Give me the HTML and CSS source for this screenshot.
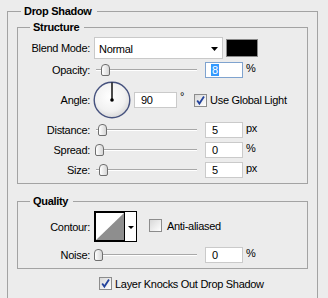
FILE: index.html
```html
<!DOCTYPE html>
<html>
<head>
<meta charset="utf-8">
<link rel="stylesheet" href="styles.css">
</head>
<body>
<fieldset class="group outer">
  <legend class="legend outer-legend">Drop Shadow</legend>

  <fieldset class="group inner structure">
    <legend class="legend inner-legend">Structure</legend>

    <div class="row row-blend">
      <span class="lbl">Blend Mode:</span>
      <div class="ctl">
        <div class="select">
          <span class="select-text">Normal</span>
          <svg class="arrow" width="7" height="4" viewBox="0 0 7 4"><polygon points="0,0 7,0 3.5,4" fill="#000"/></svg>
        </div>
        <div class="swatch"></div>
      </div>
    </div>

    <div class="row row-tight">
      <span class="lbl">Opacity:</span>
      <div class="ctl">
        <div class="slider"><div class="track"></div><div class="thumb" style="left:7px"></div></div>
        <div class="field focused"><span class="sel">8</span></div>
        <span class="unit">%</span>
      </div>
    </div>

    <div class="row row-angle">
      <span class="lbl">Angle:</span>
      <div class="ctl">
        <svg class="dial" width="38" height="38" viewBox="0 0 38 38">
          <defs>
            <radialGradient id="dg" cx="0.45" cy="0.4" r="0.6">
              <stop offset="0" stop-color="#ffffff"/>
              <stop offset="0.7" stop-color="#f1f1f1"/>
              <stop offset="1" stop-color="#d9d9d9"/>
            </radialGradient>
          </defs>
          <circle cx="19" cy="19" r="17.8" fill="url(#dg)" stroke="#46527e" stroke-width="1.4"/>
          <line x1="19" y1="19" x2="19" y2="1.5" stroke="#000" stroke-width="1.4"/>
          <circle cx="19" cy="19" r="1.8" fill="#000"/>
        </svg>
        <div class="field angle-field">90</div>
        <span class="deg">°</span>
        <span class="check checked">
          <svg width="11" height="11" viewBox="0 0 11 11"><path d="M2.2 5.4 L4.4 8.6 L9 1.6" fill="none" stroke="#23439c" stroke-width="1.8"/></svg>
        </span>
        <span class="check-text">Use Global Light</span>
      </div>
    </div>

    <div class="row">
      <span class="lbl">Distance:</span>
      <div class="ctl">
        <div class="slider"><div class="track"></div><div class="thumb" style="left:4px"></div></div>
        <div class="field">5</div>
        <span class="unit">px</span>
      </div>
    </div>

    <div class="row">
      <span class="lbl">Spread:</span>
      <div class="ctl">
        <div class="slider"><div class="track"></div><div class="thumb" style="left:1px"></div></div>
        <div class="field">0</div>
        <span class="unit">%</span>
      </div>
    </div>

    <div class="row">
      <span class="lbl">Size:</span>
      <div class="ctl">
        <div class="slider"><div class="track"></div><div class="thumb" style="left:5px"></div></div>
        <div class="field">5</div>
        <span class="unit">px</span>
      </div>
    </div>
  </fieldset>

  <fieldset class="group inner quality">
    <legend class="legend inner-legend">Quality</legend>

    <div class="row row-contour">
      <span class="lbl">Contour:</span>
      <div class="ctl">
        <svg class="contour" width="43" height="31" viewBox="0 0 43 31">
          <rect x="0" y="0" width="43" height="31" fill="#fff"/>
          <polygon points="2,29 30,2 30,29" fill="#8e8e8e"/>
          <rect x="0.5" y="0.5" width="42" height="30" fill="none" stroke="#000"/>
          <rect x="1.5" y="1.5" width="29" height="28" fill="none" stroke="#000"/>
          <polygon points="34,15 40,15 37,18" fill="#000"/>
        </svg>
        <span class="check aa-check"></span>
        <span class="check-text">Anti-aliased</span>
      </div>
    </div>

    <div class="row row-noise">
      <span class="lbl">Noise:</span>
      <div class="ctl">
        <div class="slider"><div class="track"></div><div class="thumb" style="left:0px"></div></div>
        <div class="field">0</div>
        <span class="unit">%</span>
      </div>
    </div>
  </fieldset>

  <div class="knock">
    <span class="check checked">
      <svg width="11" height="11" viewBox="0 0 11 11"><path d="M2.2 5.4 L4.4 8.6 L9 1.6" fill="none" stroke="#23439c" stroke-width="1.8"/></svg>
    </span>
    <span class="check-text">Layer Knocks Out Drop Shadow</span>
  </div>
</fieldset>
</body>
</html>
```

FILE: styles.css
```css
html, body {
  margin: 0;
  padding: 0;
}

body {
  background: #ececec;
  font-family: "Liberation Sans", Arial, sans-serif;
  font-size: 11px;
  letter-spacing: -0.3px;
  color: #000;
  width: 328px;
  height: 298px;
  overflow: hidden;
}

.group {
  margin: 0;
  border: 1px solid #a3a3a3;
  min-width: 0;
}

.outer {
  margin: 5px 0 0 7px;
  width: 311px;
  box-sizing: border-box;
  padding: 4px 9px 20px 9px;
}

.inner {
  padding: 0 0 5px 0;
}

.legend {
  font-weight: bold;
  line-height: 12px;
  padding: 0 5px 0 3px;
}

.outer-legend {
  margin-left: 4px;
}

.inner-legend {
  margin-left: 12px;
}

.quality {
  margin-top: 11px;
}

.row {
  display: grid;
  grid-template-columns: 72px 1fr;
  column-gap: 4px;
  align-items: center;
  height: 16px;
  margin-top: 4px;
}

.row-blend {
  height: 22px;
  margin-top: 4px;
}

.row-tight {
  margin-top: 3px;
}

.row-angle {
  height: 37px;
  margin-top: 3px;
}

.row-contour {
  height: 31px;
  margin-top: 4px;
}

.row-noise {
  margin-top: 5px;
}

.lbl {
  text-align: right;
  white-space: nowrap;
}

.ctl {
  display: flex;
  align-items: center;
  height: 100%;
}

.select {
  box-sizing: border-box;
  width: 129px;
  height: 22px;
  background: #fff;
  border: 1px solid #c9c9c9;
  display: flex;
  align-items: center;
  justify-content: space-between;
  padding: 0 4px 0 4px;
}

.select-text {
  padding-top: 1px;
}

.arrow {
  margin-top: 2px;
}

.swatch {
  box-sizing: border-box;
  width: 32px;
  height: 18px;
  margin-left: 3px;
  background: #000;
  border: 1px solid #8a8a8a;
}

.slider {
  position: relative;
  width: 103px;
  height: 16px;
  margin-right: 8px;
  flex: none;
}

.track {
  position: absolute;
  left: 2px;
  right: 0;
  top: 7px;
  height: 0;
  border-top: 1px solid #a8a8a8;
  border-bottom: 1px solid #ffffff;
}

.thumb {
  position: absolute;
  top: 2px;
  box-sizing: border-box;
  width: 9px;
  height: 12px;
  border: 1px solid #6f6f6f;
  border-radius: 4px 4px 2px 2px;
  background: linear-gradient(to right, #ffffff, #d6d6d6);
}

.field {
  box-sizing: border-box;
  width: 38px;
  height: 16px;
  background: #fff;
  border: 1px solid #cacaca;
  padding-left: 6px;
  line-height: 14px;
  flex: none;
}

.field.focused {
  border-color: #7fa3cf;
}

.sel {
  display: inline-block;
  background: #3399ff;
  color: #fff;
  line-height: 12px;
  padding: 0 1px;
  margin-left: -1px;
}

.unit {
  margin-left: 3px;
  align-self: flex-start;
  line-height: 12px;
}

.dial {
  margin-left: -1px;
  flex: none;
}

.angle-field {
  width: 43px;
  margin-left: 3px;
  padding-left: 6px;
}

.deg {
  margin-left: 3px;
  align-self: flex-start;
  margin-top: 10px;
  line-height: 10px;
}

.check {
  box-sizing: border-box;
  width: 13px;
  height: 13px;
  border: 1px solid #8c8c8c;
  background: linear-gradient(135deg, #d8d8d8, #ffffff);
  display: inline-flex;
  align-items: center;
  justify-content: center;
  flex: none;
}

.row-angle .check {
  margin-left: 10px;
}

.check-text {
  margin-left: 3px;
  white-space: nowrap;
}

.contour {
  flex: none;
}

.aa-check {
  margin-left: 12px;
  margin-top: -2px;
}

.row-contour .check-text {
  margin-left: 5px;
  margin-top: -2px;
}

.knock {
  display: flex;
  align-items: center;
  margin-top: 8px;
  padding-left: 82px;
  height: 13px;
}
```
